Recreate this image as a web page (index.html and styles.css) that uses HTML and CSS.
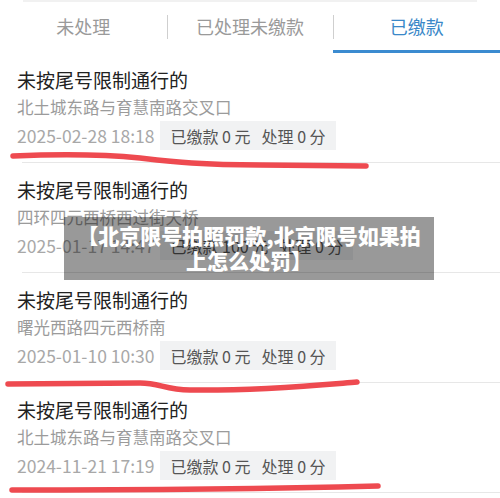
FILE: index.html
```html
<!DOCTYPE html>
<html lang="zh-CN">
<head>
<meta charset="utf-8">
<title>已缴款</title>
<link rel="stylesheet" href="styles.css">
</head>
<body>
<div class="page">
  <div class="topline"></div>
  <nav class="tabs">
    <div class="tab">未处理</div>
    <div class="tab">已处理未缴款</div>
    <div class="tab active">已缴款</div>
  </nav>
  <section class="list">
    <div class="item">
      <div class="title">未按尾号限制通行的</div>
      <div class="addr">北土城东路与育慧南路交叉口</div>
      <div class="meta">
        <span class="date">2025-02-28 18:18</span>
        <span class="badge"><span>已缴款 0 元</span><span class="gap">处理 0 分</span></span>
      </div>
    </div>
    <div class="sep"></div>
    <div class="item">
      <div class="title">未按尾号限制通行的</div>
      <div class="addr">四环四元西桥西过街天桥</div>
      <div class="meta">
        <span class="date">2025-01-17 14:47</span>
        <span class="badge"><span>已缴款 100 元</span><span class="gap">处理 0 分</span></span>
      </div>
    </div>
    <div class="sep"></div>
    <div class="item">
      <div class="title">未按尾号限制通行的</div>
      <div class="addr">曙光西路四元西桥南</div>
      <div class="meta">
        <span class="date">2025-01-10 10:30</span>
        <span class="badge"><span>已缴款 0 元</span><span class="gap">处理 0 分</span></span>
      </div>
    </div>
    <div class="sep"></div>
    <div class="item">
      <div class="title">未按尾号限制通行的</div>
      <div class="addr">北土城东路与育慧南路交叉口</div>
      <div class="meta">
        <span class="date">2024-11-21 17:19</span>
        <span class="badge"><span>已缴款 0 元</span><span class="gap">处理 0 分</span></span>
      </div>
    </div>
    <div class="sep"></div>
  </section>

  <svg class="marks" width="500" height="498" viewBox="0 0 500 498" aria-hidden="true">
    <path d="M13 156 C 60 154, 100 154, 140 158 C 175 162, 200 165, 260 165 L 366 166" />
    <path d="M8 384 L 140 383 C 160 383, 165 390, 190 390 C 260 391, 320 385, 357 382" />
    <path d="M12 490 C 150 490, 300 488, 378 486" />
  </svg>

  <div class="caption">【北京限号拍照罚款,北京限号如果拍<br>上怎么处罚】</div>
</div>
</body>
</html>
```
FILE: styles.css
```css
* { box-sizing: border-box; }
html, body { margin: 0; padding: 0; background: #fff; }
body {
  font-family: "Noto Sans CJK SC", "Noto Sans", sans-serif;
  width: 500px;
  height: 498px;
  overflow: hidden;
}
.page { position: relative; width: 500px; height: 498px; }
.topline { height: 2px; margin: 0 23px; background: #f1f1f1; }
.tabs { display: flex; height: 51px; }
.tab {
  flex: 1;
  display: flex;
  align-items: center;
  justify-content: center;
  font-size: 18px;
  color: #9a9a9a;
  border-bottom: 3px solid transparent;
}
.tab + .tab {
  background: linear-gradient(#cfcfcf, #cfcfcf) left 13px / 1px 24px no-repeat;
}
.tab.active { color: #3a88c8; border-bottom-color: #3b8bd0; }

.item { padding: 14px 0 12px 17px; }
.title { font-size: 19px; line-height: 26px; color: #222; }
.addr { font-size: 16.5px; line-height: 28px; color: #9b9b9b; }
.meta { display: flex; align-items: center; height: 29px; gap: 6px; }
.date { font-size: 17.5px; color: #a8a8a8; }
.badge {
  display: flex;
  align-items: center;
  height: 29px;
  padding: 0 10px;
  background: #f1f2f3;
  font-size: 16px;
  color: #555;
}
.badge .gap { margin-left: 11px; }
.sep { height: 1px; margin-left: 22px; background: #e7e7e7; }

.marks { position: absolute; left: 0; top: 0; pointer-events: none; }
.marks path { fill: none; stroke: #ee4a50; stroke-width: 5.5; stroke-linecap: round; stroke-linejoin: round; }

.caption {
  position: absolute;
  left: 64px;
  top: 217px;
  width: 370px;
  height: 63px;
  padding-top: 6px;
  background: rgba(0, 0, 0, 0.4);
  color: #fff;
  font-size: 21px;
  font-weight: 900;
  line-height: 25px;
  text-align: center;
}
```
